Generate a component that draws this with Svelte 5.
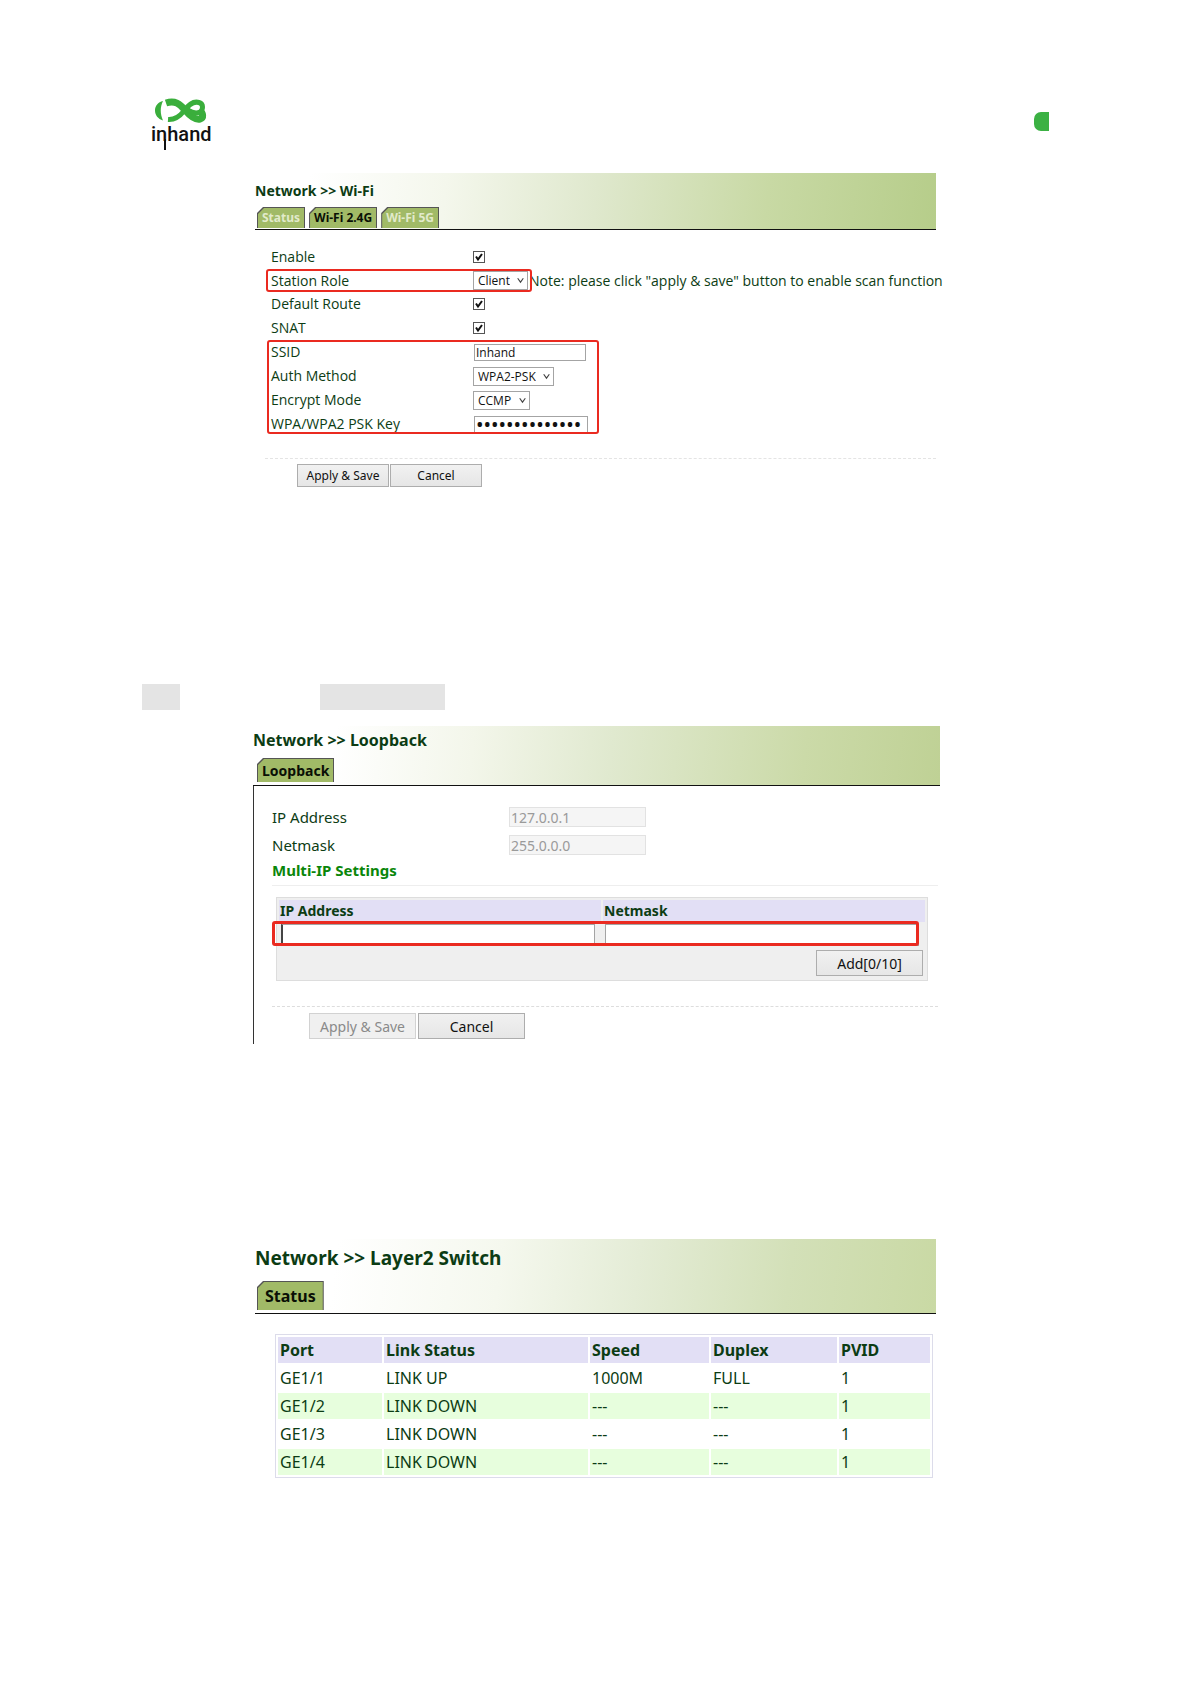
<script>
  let wifi = $state({
    enable: true,
    role: "Client",
    defaultRoute: true,
    snat: true,
    ssid: "Inhand",
    auth: "WPA2-PSK",
    encrypt: "CCMP",
    key: "inhandnetwork1",
  });

  const wifiTabs = ["Status", "Wi-Fi 2.4G", "Wi-Fi 5G"];
  let activeTab = $state("Wi-Fi 2.4G");

  let newAddress = $state("");
  let newNetmask = $state("");

  const ports = [
    { port: "GE1/1", link: "LINK UP", speed: "1000M", duplex: "FULL", pvid: 1 },
    { port: "GE1/2", link: "LINK DOWN", speed: "---", duplex: "---", pvid: 1 },
    { port: "GE1/3", link: "LINK DOWN", speed: "---", duplex: "---", pvid: 1 },
    { port: "GE1/4", link: "LINK DOWN", speed: "---", duplex: "---", pvid: 1 },
  ];
</script>

{#snippet check(id, key)}
  <span class="check">
    <input type="checkbox" {id} bind:checked={wifi[key]} />
    {#if wifi[key]}
      <svg viewBox="0 0 12 12" aria-hidden="true"><path d="M3 5.5 L5 8.5 L9 3" /></svg>
    {/if}
  </span>
{/snippet}

{#snippet picker(id, key, options)}
  <span class="picker">
    <select {id} bind:value={wifi[key]}>
      {#each options as option}
        <option>{option}</option>
      {/each}
    </select>
    <svg viewBox="0 0 8 8" aria-hidden="true"><path d="M1.5 2 L4 5.5 L6.5 2" /></svg>
  </span>
{/snippet}

<div class="page">
  <header>
    <svg class="logo" viewBox="0 0 62 56" role="img" aria-label="inhand">
      <path class="leaf" d="M12 3 C7 4 4 8 4 12.5 C4 17 7 21 12 22.5 C9 16 9 9 12 3 Z" />
      <path class="loop" d="M15 5 C24 2 29 6 34 12 C40 19 45 22 49 21 C53 20 52 15 49 13" />
      <path class="loop thin" d="M17 21.5 C24 22 29 18 33 13 C38 6 43 3 48 4.5 C53 6 52 12 49 14 C45 16 40 14 37 12" />
      <text x="0" y="43">inhand</text>
      <path class="stem" d="M14 41 V52" />
    </svg>
    <span class="marker"></span>
  </header>

  <section class="panel wifi">
    <div class="banner">
      <h2>Network &gt;&gt; Wi-Fi</h2>
      <div class="tabs">
        {#each wifiTabs as tab}
          <button class="tab" class:active={tab === activeTab} onclick={() => (activeTab = tab)}>
            <span>{tab}</span>
          </button>
        {/each}
      </div>
    </div>

    <form>
      <div class="row">
        <label for="enable">Enable</label>
        {@render check("enable", "enable")}
      </div>
      <div class="row role">
        <label for="role">Station Role</label>
        {@render picker("role", "role", ["Client", "AP"])}
        <span class="note">Note: please click "apply &amp; save" button to enable scan function</span>
      </div>
      <div class="row">
        <label for="route">Default Route</label>
        {@render check("route", "defaultRoute")}
      </div>
      <div class="row">
        <label for="snat">SNAT</label>
        {@render check("snat", "snat")}
      </div>
      <div class="security">
        <div class="row">
          <label for="ssid">SSID</label>
          <input class="text" id="ssid" type="text" bind:value={wifi.ssid} />
        </div>
        <div class="row">
          <label for="auth">Auth Method</label>
          {@render picker("auth", "auth", ["WPA2-PSK", "WPA-PSK"])}
        </div>
        <div class="row">
          <label for="encrypt">Encrypt Mode</label>
          {@render picker("encrypt", "encrypt", ["CCMP", "TKIP"])}
        </div>
        <div class="row">
          <label for="key">WPA/WPA2 PSK Key</label>
          <input class="text key" id="key" type="password" bind:value={wifi.key} />
        </div>
      </div>
    </form>
    <div class="actions">
      <button class="btn" type="button">Apply &amp; Save</button>
      <button class="btn" type="button">Cancel</button>
    </div>
  </section>

  <div class="blanks">
    <span class="short"></span>
    <span class="long"></span>
  </div>

  <section class="panel loopback">
    <div class="banner">
      <h2>Network &gt;&gt; Loopback</h2>
      <div class="tabs">
        <button class="tab active"><span>Loopback</span></button>
      </div>
    </div>

    <div class="body">
      <div class="row">
        <label for="lo-ip">IP Address</label>
        <input class="text" id="lo-ip" type="text" value="127.0.0.1" disabled />
      </div>
      <div class="row">
        <label for="lo-mask">Netmask</label>
        <input class="text" id="lo-mask" type="text" value="255.0.0.0" disabled />
      </div>
      <h3>Multi-IP Settings</h3>

      <div class="multi">
        <table>
          <thead>
            <tr><th>IP Address</th><th>Netmask</th></tr>
          </thead>
          <tbody>
            <tr class="entry">
              <td><input class="text first" type="text" aria-label="IP Address" bind:value={newAddress} /></td>
              <td><input class="text" type="text" aria-label="Netmask" bind:value={newNetmask} /></td>
            </tr>
            <tr>
              <td class="add" colspan="2"><button class="btn" type="button">Add[0/10]</button></td>
            </tr>
          </tbody>
        </table>
      </div>

      <div class="actions">
        <button class="btn" type="button" disabled>Apply &amp; Save</button>
        <button class="btn" type="button">Cancel</button>
      </div>
    </div>
  </section>

  <section class="panel switch">
    <div class="banner">
      <h2>Network &gt;&gt; Layer2 Switch</h2>
      <div class="tabs">
        <button class="tab active"><span>Status</span></button>
      </div>
    </div>

    <table class="ports">
      <colgroup>
        <col class="c-port" /><col class="c-link" /><col class="c-speed" /><col class="c-duplex" /><col />
      </colgroup>
      <thead>
        <tr><th>Port</th><th>Link Status</th><th>Speed</th><th>Duplex</th><th>PVID</th></tr>
      </thead>
      <tbody>
        {#each ports as p}
          <tr>
            <td>{p.port}</td>
            <td>{p.link}</td>
            <td>{p.speed}</td>
            <td>{p.duplex}</td>
            <td>{p.pvid}</td>
          </tr>
        {/each}
      </tbody>
    </table>
  </section>
</div>

<style>
  :global(body) { background: #fff; }
  .page {
    --ink: #0c3c14;
    --green: #a1ba67;
    --red: #ea2a20;
    padding: 98px 142px 180px;
    font-family: "Noto Sans", "Open Sans", sans-serif;
    font-size: 14px;
    line-height: 20px;
    color: var(--ink);
  }
  .page *, .page *::before, .page *::after { box-sizing: border-box; }
  button, input, select { font-family: inherit; color: #111; margin: 0; }

  header {
    display: flex;
    justify-content: space-between;
    align-items: flex-start;
    height: 75px;
    padding-left: 9px;
  }
  .logo { width: 62px; height: 56px; overflow: visible; }
  .logo .leaf { fill: #3aae3c; }
  .logo .loop { fill: none; stroke: #3aae3c; stroke-width: 7; }
  .logo .thin { stroke-width: 5; }
  .logo text { font-family: "Roboto", sans-serif; font-size: 20px; font-weight: 500; fill: #111; }
  .logo .stem { stroke: #111; stroke-width: 2; }
  .marker {
    width: 15px;
    height: 19px;
    margin-top: 14px;
    border-radius: 7px 0 0 7px;
    background: #3bb143;
  }

  .panel { margin: 0 113px; }
  .banner {
    display: flex;
    flex-direction: column;
    justify-content: space-between;
    border-bottom: 1px solid #111;
    background: linear-gradient(97deg, #fff 8%, #f4f7ec 28%, #dfe8cd 50%, #c8d9a4 75%, #b6cd8a);
  }
  h2 { margin: 0; font-size: 14px; font-weight: 700; }
  .tabs { display: flex; gap: 4px; padding: 0 2px 3px; }
  .tab {
    position: relative;
    border: none;
    padding: 0 7px;
    background: #555;
    color: #e2eacb;
    font-weight: 700;
    clip-path: polygon(6px 0, 100% 0, 100% 100%, 0 100%, 0 6px);
  }
  .tab::before {
    content: "";
    position: absolute;
    inset: 1px 1px 0 1px;
    background: var(--green);
    clip-path: polygon(6px 0, 100% 0, 100% 100%, 0 100%, 0 6px);
  }
  .tab span { position: relative; }
  .tab.active { color: #0a0f05; }

  .row { display: flex; align-items: center; height: 24px; }
  .row label { flex: none; }
  .text {
    border: 1px solid #a4a4a4;
    background: #fff;
    padding: 0 1px;
    font-size: 12px;
  }
  .btn {
    border: 1px solid #adadad;
    background: linear-gradient(#f1f1f1, #e6e6e6);
    padding: 0;
  }
  .btn:disabled { border-color: #d2d2d2; background: #f0f0f0; color: #8a8a8a; }
  .check, .picker { position: relative; display: flex; flex: none; }
  .check input {
    appearance: none;
    width: 12px;
    height: 12px;
    border: 1px solid #555;
    background: #fff;
  }
  .check svg {
    position: absolute;
    inset: 0;
    width: 12px;
    height: 12px;
    fill: none;
    stroke: #111;
    stroke-width: 2;
    pointer-events: none;
  }
  .picker select {
    appearance: none;
    height: 19px;
    border: 1px solid #a4a4a4;
    border-radius: 0;
    background: #fff;
    padding: 0 17px 0 4px;
    font-size: 12px;
  }
  .picker svg {
    position: absolute;
    right: 3px;
    top: 5px;
    width: 9px;
    height: 9px;
    fill: none;
    stroke: #444;
    stroke-width: 1;
    pointer-events: none;
  }

  .wifi .banner { height: 57px; padding-top: 8px; }
  .wifi .tabs { padding-bottom: 1px; }
  .wifi .tab { height: 21px; padding: 0 5px; font-size: 12px; }
  .wifi form { padding: 15px 0 0 16px; font-family: "Open Sans", "Noto Sans", sans-serif; }
  .wifi label { width: 202px; }
  .wifi .text { width: 112px; height: 17px; margin-left: 1px; }
  .wifi .text.key { width: 114px; font-family: "Noto Sans", sans-serif; font-size: 20px; }
  .role, .security, .multi { position: relative; }
  .role::after, .security::after, .multi::after {
    content: "";
    position: absolute;
    border: 2px solid var(--red);
    border-radius: 3px;
    pointer-events: none;
  }
  .wifi .role { height: 23px; }
  .role::after { left: -5px; top: 0; width: 266px; height: 23px; }
  .security::after { left: -4px; top: 0; width: 332px; height: 94px; }
  .note { margin-left: 1px; white-space: nowrap; }
  .wifi .actions {
    margin: 22px 0 0 10px;
    padding: 5px 0 0 32px;
    border-top: 1px dashed #e4e4e4;
    display: flex;
    gap: 1px;
  }
  .wifi .btn { width: 92px; height: 23px; font-size: 12px; }

  .blanks { display: flex; gap: 140px; margin-top: 197px; }
  .blanks span { height: 26px; background: #e4e4e4; }
  .short { width: 38px; }
  .long { width: 125px; }

  .loopback { margin: 16px 109px 0 111px; font-size: 15px; }
  .loopback .banner {
    height: 60px;
    padding-top: 4px;
    background: linear-gradient(97deg, #fff 12%, #f3f6ea 32%, #e0e9cf 52%, #cbdaa8 80%, #bfd195);
  }
  .loopback h2 { font-size: 16px; }
  .loopback .tabs { padding-left: 4px; }
  .loopback .tab { height: 24px; padding: 0 5px; font-size: 14px; }
  .loopback .body { border-left: 1px solid #333; padding: 17px 2px 5px 18px; }
  .loopback .row { height: 28px; }
  .loopback .row label { width: 237px; }
  .loopback .row .text {
    width: 137px;
    height: 20px;
    border-color: #e2e2e2;
    background: #f5f5f5;
    color: #9a9a9a;
    font-size: 14px;
  }
  h3 {
    margin: 0 0 11px;
    padding-bottom: 4px;
    border-bottom: 1px solid #eee;
    font-size: 15px;
    line-height: 22px;
    color: #0a860a;
  }
  .multi { margin: 0 10px 0 4px; }
  .multi::after { left: -4px; right: 9px; top: 24px; height: 25px; border-width: 3px; }
  .multi table {
    width: 100%;
    table-layout: fixed;
    border-collapse: separate;
    border-spacing: 2px;
    border: 1px solid #ddd;
    background: #efefef;
  }
  .multi th {
    height: 22px;
    padding: 0 1px;
    background: #e2dff5;
    text-align: left;
    font-size: 14px;
  }
  .multi td { height: 22px; padding: 0 2px; }
  .multi .entry .text { display: block; width: calc(100% - 4px); height: 22px; }
  .multi .entry .first { border-left: 2px solid #444; }
  .multi .add { height: 30px; text-align: right; }
  .multi .btn { display: block; margin-left: auto; }
  .loopback .btn { width: 107px; height: 26px; font-size: 14px; }
  .loopback .actions {
    margin-top: 25px;
    padding: 6px 0 0 37px;
    border-top: 1px dashed #ddd;
    display: flex;
    gap: 2px;
  }

  .switch { margin-top: 195px; font-size: 16px; }
  .switch .banner {
    height: 75px;
    padding-top: 9px;
    background: linear-gradient(97deg, #fff 12%, #f5f8ee 36%, #e4ecd6 56%, #d3e0b8 78%, #c9d9a4);
  }
  .switch h2 { font-size: 19px; }
  .switch .tab { height: 29px; padding: 0 8px; font-size: 16px; }
  .ports {
    width: calc(100% - 23px);
    margin: 20px 3px 0 20px;
    table-layout: fixed;
    border-collapse: separate;
    border-spacing: 2px;
    border: 1px solid #dcdcea;
  }
  .ports th, .ports td { height: 26px; padding: 0 2px; text-align: left; }
  .ports th { background: #e2dff5; }
  .ports tbody tr:nth-child(even) td { background: #e7fedd; }
  .c-port { width: 104px; }
  .c-link { width: 204px; }
  .c-speed { width: 119px; }
  .c-duplex { width: 126px; }
</style>
